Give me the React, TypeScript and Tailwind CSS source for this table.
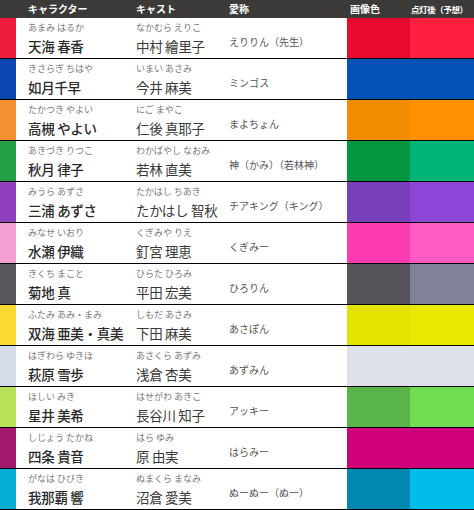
const idols = [
  { strip: '#f01c3c', yomi: 'あまみ はるか', name: '天海 春香', castYomi: 'なかむら えりこ', cast: '中村 繪里子', nick: 'えりりん（先生）', image: '#e80a2e', lit: '#fd1f3e' },
  { strip: '#0c47b4', yomi: 'きさらぎ ちはや', name: '如月千早', castYomi: 'いまい あさみ', cast: '今井 麻美', nick: 'ミンゴス', image: '#0552b7', lit: '#0552b7' },
  { strip: '#f4902f', yomi: 'たかつき やよい', name: '高槻 やよい', castYomi: 'にご まやこ', cast: '仁後 真耶子', nick: 'まよちょん', image: '#f18b00', lit: '#ff9100' },
  { strip: '#25a046', yomi: 'あきづき りつこ', name: '秋月 律子', castYomi: 'わかばやし なおみ', cast: '若林 直美', nick: '神（かみ）（若林神）', image: '#01963f', lit: '#01b477' },
  { strip: '#8f3fbd', yomi: 'みうら あずさ', name: '三浦 あずさ', castYomi: 'たかはし ちあき', cast: 'たかはし 智秋', nick: 'チアキング（キング）', image: '#793fba', lit: '#8c47d9' },
  { strip: '#f5a0d2', yomi: 'みなせ いおり', name: '水瀬 伊織', castYomi: 'くぎみや りえ', cast: '釘宮 理恵', nick: 'くぎみー', image: '#fd3cb1', lit: '#ff5bc1' },
  { strip: '#56585e', yomi: 'きくち まこと', name: '菊地 真', castYomi: 'ひらた ひろみ', cast: '平田 宏美', nick: 'ひろりん', image: '#56545b', lit: '#80829a' },
  { strip: '#fcd830', yomi: 'ふたみ あみ・まみ', name: '双海 亜美・真美', castYomi: 'しもだ あさみ', cast: '下田 麻美', nick: 'あさぽん', image: '#e4e200', lit: '#e8e800' },
  { strip: '#d5dce6', yomi: 'はぎわら ゆきほ', name: '萩原 雪歩', castYomi: 'あさくら あずみ', cast: '浅倉 杏美', nick: 'あずみん', image: '#dde2ea', lit: '#dde2ea' },
  { strip: '#b9e158', yomi: 'ほしい みき', name: '星井 美希', castYomi: 'はせがわ あきこ', cast: '長谷川 知子', nick: 'アッキー', image: '#5ab548', lit: '#70dd52' },
  { strip: '#a5186f', yomi: 'しじょう たかね', name: '四条 貴音', castYomi: 'はら ゆみ', cast: '原 由実', nick: 'はらみー', image: '#d0007a', lit: '#d0007a' },
  { strip: '#04aed5', yomi: 'がなは ひびき', name: '我那覇 響', castYomi: 'ぬまくら まなみ', cast: '沼倉 愛美', nick: 'ぬーぬー（ぬー）', image: '#0088b0', lit: '#00bde9' },
];

const font = { fontFamily: '"Noto Sans CJK JP", "Noto Sans", sans-serif' };

export default function App() {
  return (
    <div className="w-[474px] h-[510px] bg-white overflow-hidden" style={font}>
      {/* Header */}
      <div className="flex h-[18px] items-center bg-[#3b3a39] text-white font-bold">
        <div className="w-[16px]" />
        <div className="w-[120px] pl-[12px] text-[10px] leading-none">キャラクター</div>
        <div className="w-[93px] text-[10px] leading-none">キャスト</div>
        <div className="w-[118px] text-[10px] leading-none">愛称</div>
        <div className="w-[63px] pl-[3px] text-[10px] leading-none">画像色</div>
        <div className="flex-1 pl-[1px] text-[8.5px] leading-none tracking-[-0.4px] whitespace-nowrap">点灯後（予想）</div>
      </div>

      {/* Rows */}
      {idols.map(i => (
        <div key={i.name} className="flex h-[41px] border-b border-black">
          <div className="w-[16px]" style={{ backgroundColor: i.strip }} />
          <div className="w-[120px] pl-[12px] pt-[4px]">
            <div className="text-[9px] leading-[12px] text-[#7a7a7a] whitespace-nowrap">{i.yomi}</div>
            <div className="text-[13.5px] leading-[20px] mt-[2px] text-[#2a2a2a] font-medium whitespace-nowrap tracking-[-0.3px]">{i.name}</div>
          </div>
          <div className="w-[93px] pt-[4px]">
            <div className="text-[9px] leading-[12px] text-[#7a7a7a] whitespace-nowrap">{i.castYomi}</div>
            <div className="text-[13.5px] leading-[20px] mt-[2px] text-[#3a3a3a] whitespace-nowrap tracking-[-0.3px]">{i.cast}</div>
          </div>
          <div className="w-[118px] flex items-center pt-[7px] text-[10px] text-[#555] whitespace-nowrap">{i.nick}</div>
          <div className="w-[63px]" style={{ backgroundColor: i.image }} />
          <div className="flex-1" style={{ backgroundColor: i.lit }} />
        </div>
      ))}
    </div>
  );
}
